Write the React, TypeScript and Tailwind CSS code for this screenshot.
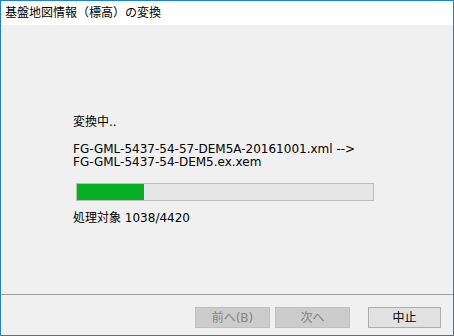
export default function App() {
  const done = 1038;
  const total = 4420;
  return (
    <div
      className="flex h-[336px] w-[454px] flex-col border border-[#1883d7] bg-[#f0f0f0] text-[12px] text-black"
      style={{ fontFamily: '"DejaVu Sans", "Noto Sans CJK JP", sans-serif' }}
    >
      <div className="flex h-[24px] shrink-0 items-center bg-white pl-[4px] leading-none">
        基盤地図情報（標高）の変換
      </div>

      <div className="flex-1 pl-[72px] pr-[40px]">
        <div className="mt-[89px] leading-[16px]">変換中..</div>
        <div className="mt-[13px] leading-[13px]">
          <div>FG-GML-5437-54-57-DEM5A-20161001.xml --&gt;</div>
          <div>FG-GML-5437-54-DEM5.ex.xem</div>
        </div>
        <div className="mt-[14px] ml-[3px] h-[18px] w-[298px] border border-[#bcbcbc] bg-[#e6e6e6]">
          <div className="h-full w-[67px] bg-[#06b025]" />
        </div>
        <div className="mt-[9px] leading-[16px]">
          処理対象 {done}/{total}
        </div>
      </div>

      <div className="h-px shrink-0 bg-[#a0a0a0]" />

      <div className="flex h-[40px] shrink-0 items-start pt-[12px] pl-[194px]">
        <button className="h-[21px] w-[75px] border border-[#bfbfbf] bg-[#cccccc] text-[12px] leading-none text-[#838383]">
          前へ(B)
        </button>
        <button className="ml-[5px] h-[21px] w-[75px] border border-[#bfbfbf] bg-[#cccccc] text-[12px] leading-none text-[#838383]">
          次へ
        </button>
        <button className="ml-[18px] h-[21px] w-[73px] border border-[#adadad] bg-[#e1e1e1] text-[12px] leading-none text-black">
          中止
        </button>
      </div>
    </div>
  );
}
